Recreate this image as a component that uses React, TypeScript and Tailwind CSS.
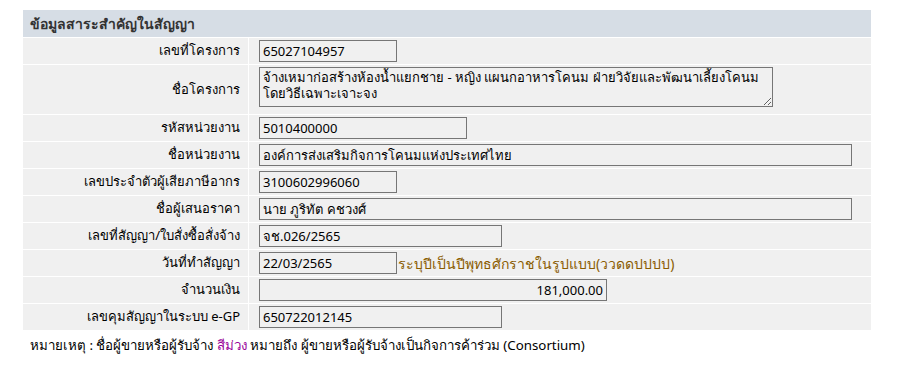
import React from "react";

type Row = {
  label: string;
  value: string;
  width: string;
  multiline?: boolean;
  right?: boolean;
  hint?: string;
};

const rows: Row[] = [
  { label: "เลขที่โครงการ", value: "65027104957", width: "w-[138px]" },
  {
    label: "ชื่อโครงการ",
    value:
      "จ้างเหมาก่อสร้างห้องน้ำแยกชาย - หญิง แผนกอาหารโคนม ฝ่ายวิจัยและพัฒนาเลี้ยงโคนม โดยวิธีเฉพาะเจาะจง",
    width: "w-[514px]",
    multiline: true,
  },
  { label: "รหัสหน่วยงาน", value: "5010400000", width: "w-[208px]" },
  { label: "ชื่อหน่วยงาน", value: "องค์การส่งเสริมกิจการโคนมแห่งประเทศไทย", width: "w-[593px]" },
  { label: "เลขประจำตัวผู้เสียภาษีอากร", value: "3100602996060", width: "w-[138px]" },
  { label: "ชื่อผู้เสนอราคา", value: "นาย ภูริทัต คชวงศ์", width: "w-[593px]" },
  { label: "เลขที่สัญญา/ใบสั่งซื้อสั่งจ้าง", value: "จช.026/2565", width: "w-[243px]" },
  {
    label: "วันที่ทำสัญญา",
    value: "22/03/2565",
    width: "w-[138px]",
    hint: "ระบุปีเป็นปีพุทธศักราชในรูปแบบ(ววดดปปปป)",
  },
  { label: "จำนวนเงิน", value: "181,000.00", width: "w-[348px]", right: true },
  { label: "เลขคุมสัญญาในระบบ e-GP", value: "650722012145", width: "w-[243px]" },
];

const fieldCls =
  "border border-[#767676] bg-[#f0f0f0] text-[13px] text-black px-[3px] outline-none font-[Tahoma,'Noto_Sans',sans-serif]";

export default function App() {
  return (
    <div className="min-h-[375px] w-[897px] bg-white pt-[10px] text-[13px] text-black font-[Tahoma,'Noto_Sans',sans-serif]">
      <div className="ml-[23px] w-[848px]">
        <div className="flex h-[27px] items-center bg-[#d6dde5] pl-[7px] text-[14px] font-bold text-[#333333]">
          ข้อมูลสาระสำคัญในสัญญา
        </div>
        <div className="flex flex-col gap-px bg-white pt-px">
          {rows.map((r) => (
            <div key={r.label} className={`grid grid-cols-[225px_1fr] gap-px ${r.multiline ? "h-[49px]" : "h-[26px]"}`}>
              <div className="flex items-center justify-end bg-[#f0f0f0] pr-[8px]">{r.label}</div>
              <div className={`flex bg-[#f0f0f0] pl-[10px] ${r.multiline ? "items-start pt-[2px]" : "items-center"}`}>
                {r.multiline ? (
                  <textarea
                    readOnly
                    value={r.value}
                    className={`${fieldCls} ${r.width} h-[40px] resize leading-[16px] py-[1px] overflow-hidden`}
                  />
                ) : (
                  <input
                    readOnly
                    value={r.value}
                    className={`${fieldCls} ${r.width} h-[22px] ${r.right ? "text-right" : ""}`}
                  />
                )}
                {r.hint && <span className="ml-px text-[14px] text-[#8a5c00]">{r.hint}</span>}
              </div>
            </div>
          ))}
        </div>
      </div>
      <div className="mt-[6px] pl-[30px] text-[13.3px]">
        หมายเหตุ : ชื่อผู้ขายหรือผู้รับจ้าง <span className="text-[#990099]">สีม่วง</span> หมายถึง
        ผู้ขายหรือผู้รับจ้างเป็นกิจการค้าร่วม (Consortium)
      </div>
    </div>
  );
}
